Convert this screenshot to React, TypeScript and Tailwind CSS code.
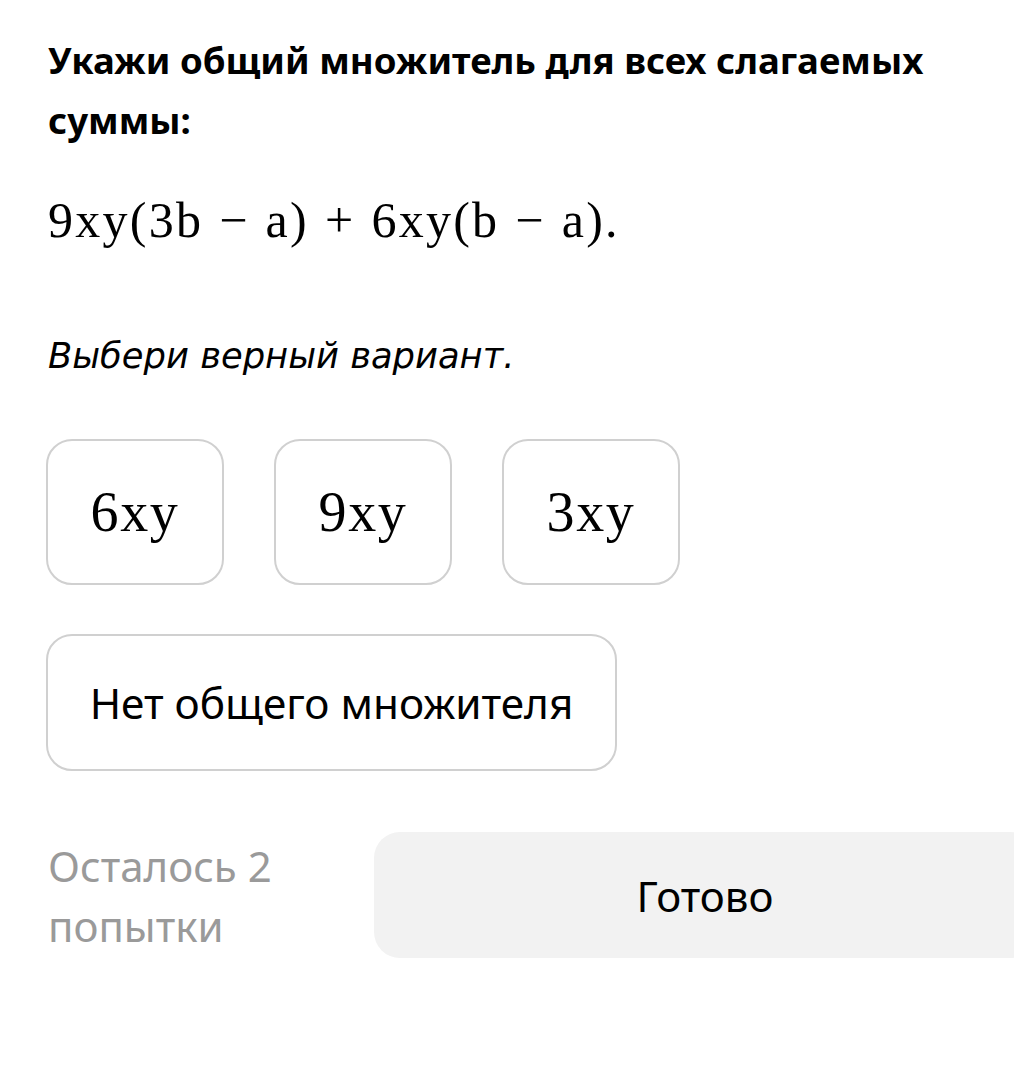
const sans = { fontFamily: '"Noto Sans", "Open Sans", sans-serif' }
const serif = { fontFamily: '"Liberation Serif", "DejaVu Serif", serif' }

const OPTIONS = ['6xy', '9xy', '3xy']

function Op({ children }: { children: React.ReactNode }) {
  return <span className="mx-[16px]">{children}</span>
}

export default function App() {
  return (
    <div className="min-h-[1083px] w-[1014px] overflow-hidden bg-white text-black" style={sans}>
      <div className="pl-12 pt-[30px]">
        <h1 className="text-[36.6px] font-bold leading-[60px] pr-8">
          Укажи общий множитель для всех слагаемых суммы:
        </h1>

        <div className="mt-[40px] text-[50px] leading-[60px] tracking-[0.045em]" style={serif}>
          9xy(3b<Op>−</Op>a)<Op>+</Op>6xy(b<Op>−</Op>a).
        </div>

        <p
          className="mt-[81px] text-[35.3px] italic leading-[50px]"
          style={{ fontFamily: '"DejaVu Sans", "Noto Sans", sans-serif' }}
        >
          Выбери верный вариант.
        </p>

        <div className="mt-[58px] flex gap-[50px] -ml-[2px]">
          {OPTIONS.map(o => (
            <button
              key={o}
              className="w-[178px] h-[146px] rounded-[26px] border-2 border-[#d0d0d0] bg-white flex items-center justify-center"
            >
              <span className="text-[56px] tracking-[0.03em]" style={serif}>{o}</span>
            </button>
          ))}
        </div>

        <button className="mt-[49px] -ml-[2px] w-[571px] h-[137px] rounded-[26px] border-2 border-[#d0d0d0] bg-white text-[42.3px]">
          Нет общего множителя
        </button>

        <div className="mt-[61px] flex items-start">
          <p className="shrink-0 w-[326px] pr-[40px] text-[42px] leading-[60px] text-[#9a9a9a] pt-[4px]">
            Осталось 2 попытки
          </p>
          <button className="shrink-0 w-[662px] h-[126px] rounded-[26px] bg-[#f2f2f2] text-[42px]">
            Готово
          </button>
        </div>
      </div>
    </div>
  )
}
